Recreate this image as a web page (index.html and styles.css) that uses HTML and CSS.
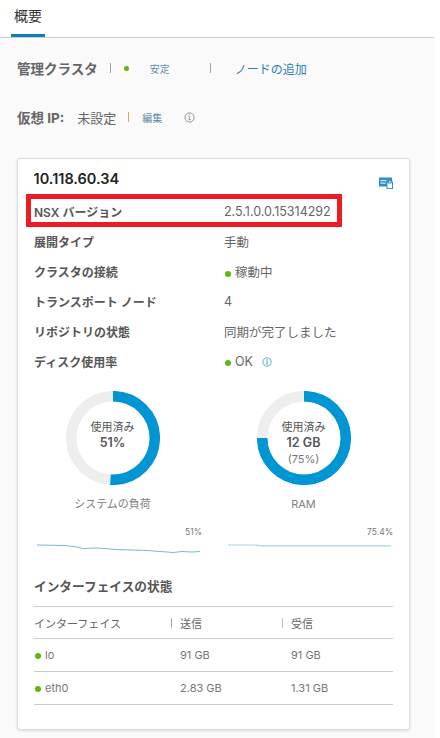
FILE: index.html
```html
<!DOCTYPE html>
<html lang="ja">
<head>
    <meta charset="UTF-8">
    <meta name="viewport" content="width=device-width, initial-scale=1.0">
    <title>概要</title>
    <link rel="stylesheet" href="styles.css">
</head>
<body>
    <div class="page">
        <nav class="tabs">
            <a class="tab">概要</a>
        </nav>

        <main class="content">
            <div class="status-line">
                <h2 class="line-title">管理クラスタ</h2>
                <span class="sep sep-first"></span>
                <span class="dot"></span>
                <span class="small-link stable">安定</span>
                <span class="sep sep-second"></span>
                <a class="add-node">ノードの追加</a>
            </div>

            <div class="vip-line">
                <h2 class="line-title">仮想 IP:</h2>
                <span class="vip-value">未設定</span>
                <span class="sep sep-orange"></span>
                <a class="small-link">編集</a>
                <svg class="info-icon" viewBox="0 0 12 12" width="11" height="11">
                    <circle cx="6" cy="6" r="5" fill="none" stroke="#8c8c8c" stroke-width="1"/>
                    <path d="M5 4.600h1.200v3.600M4.800 8.400h2.600" fill="none" stroke="#8c8c8c" stroke-width="1"/>
                    <rect x="5.200" y="2.400" width="1.200" height="1" fill="#8c8c8c"/>
                </svg>
            </div>

            <section class="card">
                <div class="card-head">
                    <h3 class="node-ip">10.118.60.34</h3>
                    <svg class="cert-icon" viewBox="0 0 14 12" width="14" height="12">
                        <rect x="0" y="0.500" width="13" height="9" fill="#2f8fcb"/>
                        <rect x="1.500" y="3" width="6" height="1.200" fill="#d8ecf7"/>
                        <rect x="1.500" y="5.600" width="5" height="1.200" fill="#d8ecf7"/>
                        <rect x="8" y="5" width="5.500" height="6.600" fill="#fff" stroke="#2f8fcb" stroke-width="1"/>
                        <rect x="9.600" y="3.600" width="2.400" height="2.400" fill="#fff" stroke="#2f8fcb" stroke-width="1"/>
                    </svg>
                </div>

                <div class="info-row highlighted">
                    <span class="info-label">NSX バージョン</span>
                    <span class="info-value">2.5.1.0.0.15314292</span>
                </div>
                <div class="info-row">
                    <span class="info-label">展開タイプ</span>
                    <span class="info-value">手動</span>
                </div>
                <div class="info-row">
                    <span class="info-label">クラスタの接続</span>
                    <span class="info-value"><span class="dot"></span>稼動中</span>
                </div>
                <div class="info-row">
                    <span class="info-label">トランスポート ノード</span>
                    <span class="info-value">4</span>
                </div>
                <div class="info-row">
                    <span class="info-label">リポジトリの状態</span>
                    <span class="info-value">同期が完了しました</span>
                </div>
                <div class="info-row">
                    <span class="info-label">ディスク使用率</span>
                    <span class="info-value">
                        <span class="dot"></span>OK
                        <svg class="ok-info" viewBox="0 0 12 12" width="10" height="10">
                            <circle cx="6" cy="6" r="5" fill="none" stroke="#3d9bd6" stroke-width="1"/>
                            <path d="M5 4.600h1.200v3.600M4.800 8.400h2.600" fill="none" stroke="#3d9bd6" stroke-width="1"/>
                            <rect x="5.200" y="2.400" width="1.200" height="1" fill="#3d9bd6"/>
                        </svg>
                    </span>
                </div>

                <div class="charts">
                    <div class="chart">
                        <div class="donut">
                            <svg viewBox="0 0 94 94" width="94" height="94">
                                <circle class="donut-bg" cx="47" cy="47" r="41.800"/>
                                <circle class="donut-fg" cx="47" cy="47" r="41.800" pathLength="100" stroke-dasharray="51 49" transform="rotate(-90 47 47)"/>
                            </svg>
                            <div class="donut-text">
                                <span>使用済み</span>
                                <strong>51%</strong>
                            </div>
                        </div>
                        <div class="chart-name">システムの負荷</div>
                        <div class="spark">
                            <span class="spark-value">51%</span>
                            <svg viewBox="0 0 163 12" width="163" height="12">
                                <polyline class="spark-line" points="0,1 28,1.500 40,3 46,4.500 60,4 80,5.500 110,6.500 130,8 136,8.500 145,7.500 155,8 163,7.500"/>
                            </svg>
                        </div>
                    </div>
                    <div class="chart">
                        <div class="donut">
                            <svg viewBox="0 0 94 94" width="94" height="94">
                                <circle class="donut-bg" cx="47" cy="47" r="41.800"/>
                                <circle class="donut-fg" cx="47" cy="47" r="41.800" pathLength="100" stroke-dasharray="75 25" transform="rotate(-90 47 47)"/>
                            </svg>
                            <div class="donut-text">
                                <span>使用済み</span>
                                <strong>12 GB</strong>
                                <span class="donut-pct">(75%)</span>
                            </div>
                        </div>
                        <div class="chart-name">RAM</div>
                        <div class="spark">
                            <span class="spark-value">75.4%</span>
                            <svg viewBox="0 0 163 12" width="163" height="12">
                                <polyline class="spark-line light" points="0,1 25,1 35,1.800 163,1.800"/>
                            </svg>
                        </div>
                    </div>
                </div>

                <h4 class="table-title">インターフェイスの状態</h4>
                <table class="iface-table">
                    <thead>
                        <tr>
                            <th class="col-name">インターフェイス</th>
                            <th class="col-num">送信</th>
                            <th class="col-num">受信</th>
                        </tr>
                    </thead>
                    <tbody>
                        <tr>
                            <td><span class="dot"></span>lo</td>
                            <td>91 GB</td>
                            <td>91 GB</td>
                        </tr>
                        <tr>
                            <td><span class="dot"></span>eth0</td>
                            <td>2.83 GB</td>
                            <td>1.31 GB</td>
                        </tr>
                    </tbody>
                </table>
            </section>
        </main>
    </div>
</body>
</html>
```
FILE: styles.css
```css
* {
    box-sizing: border-box;
}
body {
    margin: 0;
    background: #fff;
    color: #565656;
    font-family: "Inter", "Noto Sans CJK JP", sans-serif;
    font-size: 12px;
}
.page {
    width: 434px;
    height: 738px;
    overflow: hidden;
    background: #fafafa;
}
.tabs {
    height: 38px;
    padding-left: 11px;
    background: #fff;
    border-bottom: 1px solid #ccc;
}
.tab {
    display: block;
    width: 34px;
    height: 37px;
    padding: 6px 0 0 3px;
    border-bottom: 3px solid #0d7fbe;
    color: #333;
    font-size: 14px;
    line-height: 20px;
}
.content {
    padding-left: 17px;
}
.status-line,
.vip-line {
    display: flex;
    align-items: center;
    height: 20px;
}
.status-line {
    margin-top: 20px;
}
.vip-line {
    margin-top: 29px;
}
.line-title {
    margin: 0;
    color: #666;
    font-size: 13.500px;
    font-weight: 700;
}
.sep {
    width: 1px;
    height: 10px;
    background: #8fa6b5;
}
.sep-first {
    margin-left: 12px;
}
.sep-second {
    margin-left: 40px;
    background: #a3a78f;
}
.sep-orange {
    margin-left: 12px;
    background: #d9a679;
}
.dot {
    display: inline-block;
    width: 6px;
    height: 6px;
    margin-right: 4px;
    border-radius: 50%;
    background: #60b515;
    vertical-align: 0;
}
.status-line .dot {
    width: 5px;
    height: 5px;
    margin: 0 0 0 13px;
}
.small-link {
    margin-left: 13px;
    color: #5f8ba8;
    font-size: 10px;
}
.stable {
    margin-left: 21px;
}
.add-node {
    margin-left: 24px;
    color: #2a7fb5;
    font-size: 12px;
}
.vip-value {
    margin-left: 13px;
    color: #666;
    font-size: 13px;
}
.info-icon {
    margin-left: 22px;
}
.card {
    width: 393px;
    height: 572px;
    margin-top: 31px;
    padding: 0 16px;
    background: #fff;
    border: 1px solid #ddd;
    border-radius: 3px;
    box-shadow: 0 1px 3px rgba(0, 0, 0, 0.12);
}
.card-head {
    display: flex;
    justify-content: space-between;
    align-items: center;
    height: 35px;
    padding-top: 4px;
}
.node-ip {
    margin: 0 0 0 -0.500px;
    color: #222;
    font-size: 14.500px;
    font-weight: 600;
}
.cert-icon {
    margin-top: 8px;
}
.info-row {
    display: flex;
    align-items: center;
    height: 30px;
}
.info-label {
    width: 190px;
    flex-shrink: 0;
    color: #565656;
    font-weight: 600;
}
.info-value {
    color: #666;
    font-size: 12.500px;
}
.info-value .dot {
    margin-left: 1px;
}
.highlighted {
    width: 316px;
    height: 33px;
    margin: 0 0 -1px -8px;
    padding: 1px 0 0 3px;
    border: 5px solid #ed1c24;
}
.ok-info {
    margin-left: 6px;
    vertical-align: -1px;
}
.charts {
    display: flex;
    margin-top: 15px;
}
.chart {
    width: 191px;
    flex-shrink: 0;
}
.donut {
    position: relative;
    width: 94px;
    height: 94px;
    margin-left: 31.500px;
}
.donut-bg,
.donut-fg {
    fill: none;
    stroke-width: 10.500;
}
.donut-bg {
    stroke: #eee;
}
.donut-fg {
    stroke: #0095d3;
}
.donut-text {
    position: absolute;
    inset: 0;
    display: flex;
    flex-direction: column;
    align-items: center;
    padding-top: 28px;
    color: #565656;
    font-size: 11px;
    line-height: 16px;
}
.donut-text strong {
    font-size: 12.500px;
    font-weight: 600;
    line-height: 16px;
}
.donut-pct {
    color: #777;
}
.chart-name {
    display: flex;
    justify-content: center;
    width: 94px;
    margin: 11px 0 0 31.500px;
    color: #808080;
    font-size: 11px;
    line-height: 16px;
    white-space: nowrap;
}
.spark {
    position: relative;
    width: 165px;
    height: 36px;
    margin: 14px 0 0 3px;
}
.spark-value {
    position: absolute;
    top: 0;
    right: 0;
    color: #777;
    font-size: 8.500px;
    line-height: 12px;
}
.spark svg {
    position: absolute;
    left: 0;
    top: 18px;
}
.spark-line {
    fill: none;
    stroke: #7db7d2;
    stroke-width: 1;
}
.spark-line.light {
    stroke: #a9d2e4;
    stroke-width: 1.200;
}
.table-title {
    margin: 15px 0 0;
    color: #565656;
    font-size: 12.700px;
    font-weight: 600;
    line-height: 20px;
}
.iface-table {
    width: 359px;
    margin-top: 9px;
    border-collapse: collapse;
    border-top: 1px solid #ccc;
    table-layout: fixed;
}
.iface-table th,
.iface-table td {
    height: 33px;
    padding: 0;
    border-bottom: 1px solid #ccc;
    color: #777;
    font-size: 11px;
    font-weight: 400;
    text-align: left;
}
.iface-table th {
    height: 32px;
    color: #666;
}
.iface-table td:first-child,
.col-name {
    width: 146px;
}
.iface-table td:first-child .dot {
    margin-left: 1px;
}
.iface-table td:nth-child(2),
.iface-table th:nth-child(2) {
    width: 111px;
}
.col-num {
    position: relative;
}
.col-num::before {
    content: "";
    position: absolute;
    left: -9px;
    top: 11px;
    width: 1px;
    height: 10px;
    background: #a3a78f;
}
.col-num:last-child::before {
    background: #9fc9e4;
}
```
